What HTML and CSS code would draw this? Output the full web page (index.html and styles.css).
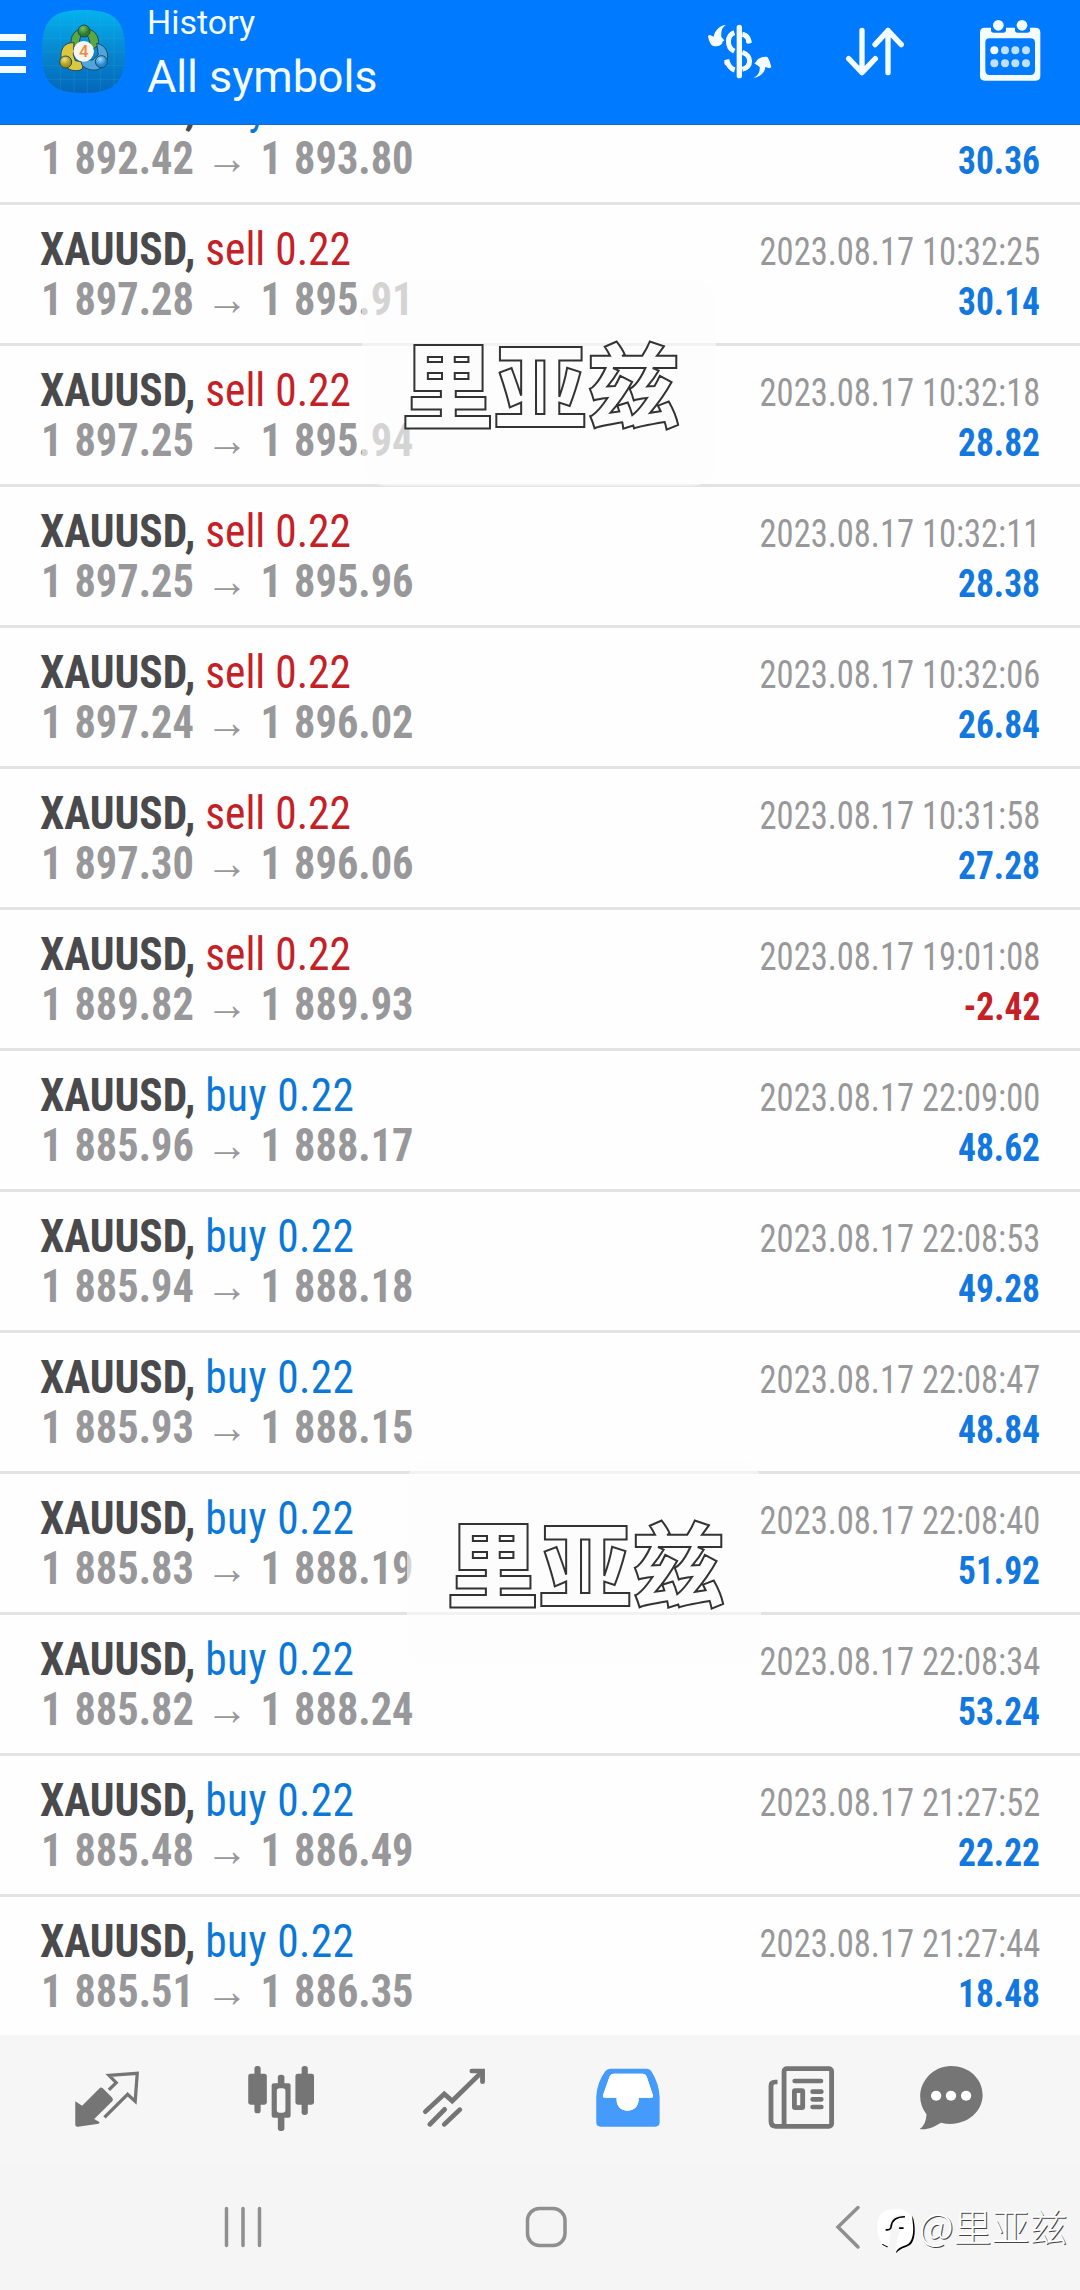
FILE: index.html
```html
<!DOCTYPE html>
<html lang="en">
<head>
<meta charset="utf-8">
<title>History</title>
<link rel="stylesheet" href="styles.css">
</head>
<body>
<div class="screen">
  <header class="header">
    <div class="menu"><i></i><i></i><i></i></div>
    <svg class="logo" viewBox="126 30 249 249">
      <defs>
        <linearGradient id="bg" x1="0" y1="0" x2="0" y2="1"><stop offset="0" stop-color="#04b2ee"/><stop offset=".5" stop-color="#0787d0"/><stop offset="1" stop-color="#0467b9"/></linearGradient>
        <radialGradient id="green" cx=".4" cy=".3"><stop offset="0" stop-color="#7cc15c"/><stop offset="1" stop-color="#2c7a2c"/></radialGradient>
        <radialGradient id="gold" cx=".4" cy=".3"><stop offset="0" stop-color="#efe27c"/><stop offset="1" stop-color="#ab9418"/></radialGradient>
        <radialGradient id="sky" cx=".4" cy=".3"><stop offset="0" stop-color="#9bdcff"/><stop offset="1" stop-color="#2489d0"/></radialGradient>
      </defs>
      <path fill="url(#bg)" d="M250 30C345 30 375 60 375 154S345 279 250 279 126 248 126 154 155 30 250 30Z"/>
      <path stroke="#3cb4e8" stroke-opacity=".3" stroke-width="2" fill="none" d="M182 38V270M222 31V278M262 30V279M302 33V275M342 48V260M134 75H367M127 115H374M126 156H375M128 197H373M137 238H363"/>
      <g stroke="#1c4a5c" stroke-width="3">
        <path fill="#5aa843" d="M214 138C208 104 228 86 254 86s45 18 41 50l-19 13-12-40h-22l-8 32Z"/>
        <path fill="#dcc83e" d="M222 128c-32-2-43 24-38 48 5 27 35 45 62 32l6-22-26-4-6-18Z"/>
        <path fill="#4fa5dc" d="M290 130c28 4 40 34 29 55-13 29-47 33-72 12l-7-19 38 2 17-16Z"/>
        <circle cx="252" cy="93" r="18" fill="url(#green)"/>
        <circle cx="197" cy="186" r="18" fill="url(#gold)"/>
        <circle cx="304" cy="185" r="18" fill="url(#sky)"/>
      </g>
      <circle cx="251" cy="154" r="31" fill="#f8f5f0"/>
      <text x="251" y="172" class="logo-digit">4</text>
    </svg>
    <div class="titles"><div class="title">History</div><div class="subtitle">All symbols</div></div>
    <div class="actions">
      <svg width="80" height="80" viewBox="120 33 240 240" fill="none" stroke="#f4fcff">
        <path stroke-width="16" stroke-linecap="round" d="M238 82V227"/>
        <path stroke-width="15" d="M223 98C200 106 199 142 223 154M247 103c12 2 19 10 21 26M200 179c4 16 11 27 24 31M247 157c28 8 30 44 0 51"/>
        <path stroke-width="16" stroke-linecap="round" d="M266 122V123M201 187V188"/>
        <path fill="#f4fcff" stroke="none" d="M198 75c-11 5-16 18-14 36l9 10-6 5c2 8-18 17-29 11-7-4-12-16-14-30l6-2 11 5c3-18 18-34 37-35ZM279 235c14-7 22-19 20-34l-16-11 6-5c2-8 20-18 33-14 6 7 9 18 12 31l-6 3-12-4c-2 18-16 31-37 34Z"/>
      </svg>
      <svg width="80" height="80" viewBox="526 33 240 240" fill="none" stroke="#f4fcff" stroke-width="16" stroke-linecap="round" stroke-linejoin="round"><path d="M607 91V217M567 176l40 42 40-42M685 218V91M646 134l39-42 40 42"/></svg>
      <svg width="80" height="80" viewBox="930 33 240 240">
        <path fill="#f4fcff" fill-rule="evenodd" d="M974 83h19v7q0 8 8 8h29q8 0 8-8v-7h27v7q0 8 8 8h29q8 0 8-8v-7h17q14 0 14 14v131q0 14-14 14H974q-14 0-14-14V97q0-14 14-14ZM989 115q-13 0-13 13v83q0 14 13 14h122q14 0 14-14v-83q0-13-14-13Z"/>
        <g fill="#f4fcff"><circle cx="1015" cy="76" r="16"/><circle cx="1086" cy="76" r="16"/><circle cx="1003" cy="151" r="12"/></g>
        <g fill="#bfe0ff"><circle cx="1035" cy="151" r="12"/><circle cx="1066" cy="151" r="12"/><circle cx="1098" cy="151" r="12"/><circle cx="1003" cy="190" r="12"/><circle cx="1035" cy="190" r="12"/><circle cx="1066" cy="190" r="12"/><circle cx="1098" cy="190" r="12"/></g>
      </svg>
    </div>
  </header>

  <main class="list">
    <div class="deal"><div class="line"><div class="symbol">XAUUSD, <span class="buy">buy 0.22</span></div><div class="time">2023.08.17 10:32:31</div></div><div class="line"><div class="price">1 892.42 <b>→</b> 1 893.80</div><div class="profit">30.36</div></div></div>
    <div class="deal"><div class="line"><div class="symbol">XAUUSD, <span class="sell">sell 0.22</span></div><div class="time">2023.08.17 10:32:25</div></div><div class="line"><div class="price">1 897.28 <b>→</b> 1 895.91</div><div class="profit">30.14</div></div></div>
    <div class="deal"><div class="line"><div class="symbol">XAUUSD, <span class="sell">sell 0.22</span></div><div class="time">2023.08.17 10:32:18</div></div><div class="line"><div class="price">1 897.25 <b>→</b> 1 895.94</div><div class="profit">28.82</div></div></div>
    <div class="deal"><div class="line"><div class="symbol">XAUUSD, <span class="sell">sell 0.22</span></div><div class="time">2023.08.17 10:32:11</div></div><div class="line"><div class="price">1 897.25 <b>→</b> 1 895.96</div><div class="profit">28.38</div></div></div>
    <div class="deal"><div class="line"><div class="symbol">XAUUSD, <span class="sell">sell 0.22</span></div><div class="time">2023.08.17 10:32:06</div></div><div class="line"><div class="price">1 897.24 <b>→</b> 1 896.02</div><div class="profit">26.84</div></div></div>
    <div class="deal"><div class="line"><div class="symbol">XAUUSD, <span class="sell">sell 0.22</span></div><div class="time">2023.08.17 10:31:58</div></div><div class="line"><div class="price">1 897.30 <b>→</b> 1 896.06</div><div class="profit">27.28</div></div></div>
    <div class="deal"><div class="line"><div class="symbol">XAUUSD, <span class="sell">sell 0.22</span></div><div class="time">2023.08.17 19:01:08</div></div><div class="line"><div class="price">1 889.82 <b>→</b> 1 889.93</div><div class="profit loss">-2.42</div></div></div>
    <div class="deal"><div class="line"><div class="symbol">XAUUSD, <span class="buy">buy 0.22</span></div><div class="time">2023.08.17 22:09:00</div></div><div class="line"><div class="price">1 885.96 <b>→</b> 1 888.17</div><div class="profit">48.62</div></div></div>
    <div class="deal"><div class="line"><div class="symbol">XAUUSD, <span class="buy">buy 0.22</span></div><div class="time">2023.08.17 22:08:53</div></div><div class="line"><div class="price">1 885.94 <b>→</b> 1 888.18</div><div class="profit">49.28</div></div></div>
    <div class="deal"><div class="line"><div class="symbol">XAUUSD, <span class="buy">buy 0.22</span></div><div class="time">2023.08.17 22:08:47</div></div><div class="line"><div class="price">1 885.93 <b>→</b> 1 888.15</div><div class="profit">48.84</div></div></div>
    <div class="deal"><div class="line"><div class="symbol">XAUUSD, <span class="buy">buy 0.22</span></div><div class="time">2023.08.17 22:08:40</div></div><div class="line"><div class="price">1 885.83 <b>→</b> 1 888.19</div><div class="profit">51.92</div></div></div>
    <div class="deal"><div class="line"><div class="symbol">XAUUSD, <span class="buy">buy 0.22</span></div><div class="time">2023.08.17 22:08:34</div></div><div class="line"><div class="price">1 885.82 <b>→</b> 1 888.24</div><div class="profit">53.24</div></div></div>
    <div class="deal"><div class="line"><div class="symbol">XAUUSD, <span class="buy">buy 0.22</span></div><div class="time">2023.08.17 21:27:52</div></div><div class="line"><div class="price">1 885.48 <b>→</b> 1 886.49</div><div class="profit">22.22</div></div></div>
    <div class="deal"><div class="line"><div class="symbol">XAUUSD, <span class="buy">buy 0.22</span></div><div class="time">2023.08.17 21:27:44</div></div><div class="line"><div class="price">1 885.51 <b>→</b> 1 886.35</div><div class="profit">18.48</div></div></div>
  </main>

  <nav class="tabs">
    <svg preserveAspectRatio="none" viewBox="196 115 232.3 240">
      <path fill="#757575" d="M220 245l20 13 52-54q4-2 8 2l26 27q6 6 2 11l-53 54 16 10-3 4-60 9q-8 1-8-6Z"/>
      <path fill="none" stroke="#757575" stroke-width="9.500" stroke-linecap="square" d="M321 207l18-18-21-22 82-6-6 84-22-21-64 66"/>
    </svg>
    <svg preserveAspectRatio="none" viewBox="697 115 232.3 240" fill="#757575">
      <rect x="736" y="139" width="18" height="142" rx="8"/><rect x="718" y="162" width="54" height="93" rx="7"/>
      <rect x="873" y="139" width="18" height="147" rx="8"/><rect x="855" y="162" width="54" height="93" rx="7"/>
      <rect x="804" y="165" width="19" height="40" rx="8"/><rect x="804" y="280" width="19" height="54" rx="8"/>
      <path fill-rule="evenodd" d="M793 191h42q6 0 6 6v91q0 6-6 6h-42q-7 0-7-6v-91q0-6 7-6ZM809 206q-8 0-8 8v57q0 8 8 8h9q8 0 8-8v-57q0-8-8-8Z"/>
    </svg>
    <svg preserveAspectRatio="none" viewBox="1200 115 232.3 240" fill="none" stroke="#757575" stroke-width="14" stroke-linecap="round"><path stroke-linejoin="miter" d="M1233 276l55-53 23 21 87-88"/><path d="M1368 154h31v32M1246 314l43-45M1288 314l45-44"/></svg>
    <svg preserveAspectRatio="none" viewBox="137 115 232.3 240"><path fill="#459bfb" fill-rule="evenodd" d="M202 147h106q9 0 13 8 22 36 24 76v77q0 13-13 13H174q-13 0-13-13v-77q2-42 26-76 5-8 15-8ZM211 162q-8 0-11 8l-19 55q-3 9 5 9h34v8c2 42 61 42 64 0v-8h36q8 0 5-9l-18-55q-3-8-11-8Z"/><path fill="#fff" d="M211 162q-8 0-11 8l-19 55q-3 9 5 9h34v8c2 42 61 42 64 0v-8h36q8 0 5-9l-18-55q-3-8-11-8Z"/></svg>
    <svg preserveAspectRatio="none" viewBox="643 115 232.3 240" fill="none" stroke="#757575"><g stroke-width="14"><rect x="710" y="147" width="138" height="173" rx="8"/><path d="M691 187h-7q-12 0-12 12v106q0 15 13 15h30"/><path stroke-linecap="round" d="M741 184h76M793 216h25M793 239h25M793 262h25"/></g><rect x="740" y="213" width="24" height="51" rx="2" stroke-width="14"/></svg>
    <svg preserveAspectRatio="none" viewBox="1077 115 232.3 240"><path fill="#757575" d="M1193 139c52 0 92 38 92 87 0 56-58 100-121 83-20 13-42 23-62 19q19-12 20-44c-46-61 1-145 71-145Z"/><g fill="#fff"><circle cx="1150" cy="228" r="15"/><circle cx="1193" cy="228" r="15"/><circle cx="1237" cy="228" r="15"/></g></svg>
  </nav>
  <div class="system">
    <svg viewBox="0 0 60 60"><path d="M13.5 11.5v37M30 11.5v37M46.500 11.500v37"/></svg>
    <svg viewBox="0 0 60 60"><rect x="11.500" y="11.500" width="37.500" height="37" rx="12"/></svg>
    <svg viewBox="0 0 60 60"><path d="M40 10.500L20 30 40 50"/></svg>
  </div>

  <div class="stamp stamp-top">里亚兹</div>
  <div class="stamp stamp-low">里亚兹</div>
  <div class="credit">
    <svg preserveAspectRatio="none" viewBox="980 565 116 140"><path fill="#000" d="M994 677l16 9 4-20ZM1083 590c10 36 8 66-2 82-12 16-28 9-46 31 3-18 12-26 24-30 18-6 20-22 22-38Z"/><path fill="#fff" d="M1035 571c38 0 50 22 50 58 0 28-8 46-22 50-12 4-20 8-28 18 0-18 2-28 6-44l8-22h9v-9h-31v-8c0-14 14-24 34-20v-5c-24-4-40 6-43 25l-12 11v7h14l-6 50c-22-4-33-24-33-54 0-39 14-57 54-57Z"/><path fill="none" stroke="#000" stroke-width="5" d="M1005 633h5q10 0 11-10c2-19 14-29 40-29M1044 628h13"/></svg>
    <span>@里亚兹</span>
  </div>
</div>
</body>
</html>
```
FILE: styles.css
```css
* { box-sizing: border-box; }
body { margin: 0; background: #fff; }
.screen {
  position: relative;
  width: 1080px;
  height: 2290px;
  display: flex;
  flex-direction: column;
  overflow: hidden;
  font-family: Roboto, "Liberation Sans", sans-serif;
}

.header {
  height: 125px;
  flex: none;
  display: flex;
  align-items: flex-start;
  background: #007aff;
  border-bottom: 1px solid #1a68b8;
  color: #f4fcff;
}
.menu { width: 26px; padding-top: 34px; display: flex; flex-direction: column; gap: 9px; }
.menu i { height: 7px; background: #f4fcff; }
.logo { width: 83px; height: 83px; margin: 10px 22px 0 16px; }
.logo-digit { font: 500 50px Roboto, sans-serif; fill: #f0883a; text-anchor: middle; }
.titles { white-space: nowrap; }
.title { font-size: 34px; line-height: 45px; }
.subtitle { font-size: 45px; line-height: 63px; letter-spacing: -.1px; }
.actions { margin-left: auto; padding: 11px 30px 0 0; display: flex; gap: 55px; }

.list {
  height: 1910px;
  flex: none;
  display: flex;
  flex-direction: column;
  justify-content: flex-end;
  overflow: hidden;
  font-family: "Roboto Condensed", Roboto, sans-serif;
  font-stretch: 75%;
}
.deal { height: 141px; flex: none; border-top: 3px solid #e3e3e3; padding: 19px 40px 0; background: #fefefe; }
.line { height: 50px; line-height: 50px; display: flex; justify-content: space-between; align-items: baseline; white-space: nowrap; }
.symbol { font-size: 46px; font-weight: 700; color: #4a4a4d; transform: scaleX(.943); transform-origin: left; }
.symbol span { font-weight: 430; }
.symbol .buy { letter-spacing: .4px; }
.buy { color: #0b78d8; }
.sell { color: #c42127; }
.time { font-size: 38.500px; color: #98989a; transform: scaleX(.896); transform-origin: right; }
.price { padding-left: 1px; font-size: 46px; font-weight: 700; color: #98989a; word-spacing: 2.500px; transform: scaleX(.922); transform-origin: left; }
.profit { font-size: 38.500px; font-weight: 700; color: #1277de; transform: scaleX(.922); transform-origin: right; }
.loss { color: #c42127; }

.tabs { height: 128px; flex: none; display: flex; gap: 93.500px; padding: 23px 0 0 67px; background: #f6f6f6; }
.tabs svg { width: 80px; height: 80px; flex: none; }
.tabs svg:last-child { margin-left: -24px; }
.system { flex: 1; display: flex; gap: 242.500px; padding: 34px 0 0 213px; background: #f5f5f5; }
.system svg { width: 60px; height: 60px; flex: none; fill: none; stroke: #8f8f8f; stroke-width: 3.500; stroke-linecap: round; }

.stamp {
  position: absolute;
  width: 354px;
  height: 206px;
  border-radius: 24px;
  background: rgba(252, 252, 252, .6);
  padding-left: 39px;
  font: 900 93px/203px "Noto Sans CJK SC", sans-serif;
  color: #fcfcfc;
  -webkit-text-stroke: 2px #333;
  white-space: nowrap;
}
.stamp-top { left: 362px; top: 280px; }
.stamp-low { left: 407px; top: 1459px; }

.credit {
  position: absolute;
  left: 877px;
  top: 2207px;
  display: flex;
  align-items: flex-start;
  gap: 2px;
  font: 300 38px/50px "Noto Sans CJK SC", sans-serif;
  color: #fff;
  text-shadow: 1px 1px 0 #444;
  white-space: nowrap;
}
.credit svg { width: 40px; height: 47px; }
.credit span { margin-top: -7px; }
```
